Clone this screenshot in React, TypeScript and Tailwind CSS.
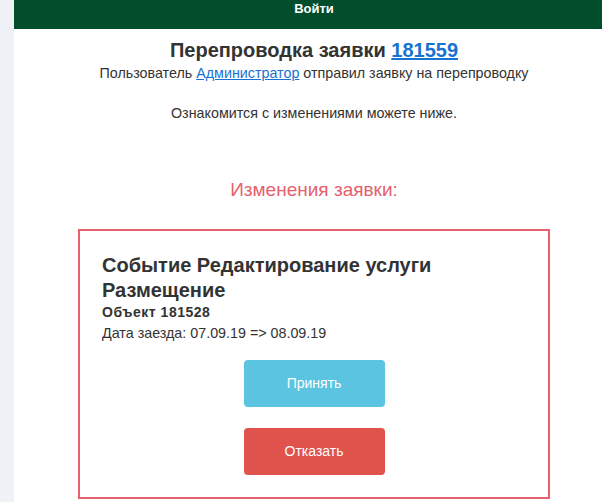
import React from 'react';

const font = { fontFamily: '"Liberation Sans", Arial, sans-serif' };

export default function App() {
  return (
    <div className="w-[602px] h-[502px] overflow-hidden bg-[#eef1f6]" style={font}>
      <div className="flex h-full">
        <div className="w-[14px] shrink-0" />
        <div className="w-[600px] shrink-0 bg-white text-[#333] text-center">
          {/* Header */}
          <div className="h-[29px] bg-[#024d2c] text-white font-bold text-[13px] leading-[17px]">
            Войти
          </div>

          <h1 className="mt-[9px] text-[20px] leading-[24px] font-bold">
            Перепроводка заявки{' '}
            <a href="#" className="text-[#1872d2] underline">181559</a>
          </h1>
          <p className="mt-[3px] text-[14.3px] leading-[17px]">
            Пользователь <a href="#" className="text-[#1872d2] underline">Администратор</a> отправил заявку на перепроводку
          </p>
          <p className="mt-[23px] text-[14.3px] leading-[17px]">
            Ознакомится с изменениями можете ниже.
          </p>

          <h2 className="mt-[56px] text-[19px] leading-[24px] text-[#e6606d]">
            Изменения заявки:
          </h2>

          {/* Changes card */}
          <div className="mt-[27px] mx-[64px] border-2 border-[#e6606d] pt-[22px] pb-[22px] px-[22px] text-left">
            <h3 className="text-[20px] leading-[25px] font-bold">
              Событие Редактирование услуги Размещение
            </h3>
            <div className="text-[14px] leading-[18px] font-bold tracking-[0.5px]">Объект 181528</div>
            <div className="mt-[3px] text-[14.3px] leading-[18px]">Дата заезда: 07.09.19 =&gt; 08.09.19</div>

            <div className="mt-[18px] flex flex-col items-center gap-[21px]">
              <button className="w-[141px] h-[47px] rounded-[4px] bg-[#5bc4e0] text-white text-[14px]">
                Принять
              </button>
              <button className="w-[141px] h-[47px] rounded-[4px] bg-[#df534c] text-white text-[14px]">
                Отказать
              </button>
            </div>
          </div>
        </div>
      </div>
    </div>
  );
}
